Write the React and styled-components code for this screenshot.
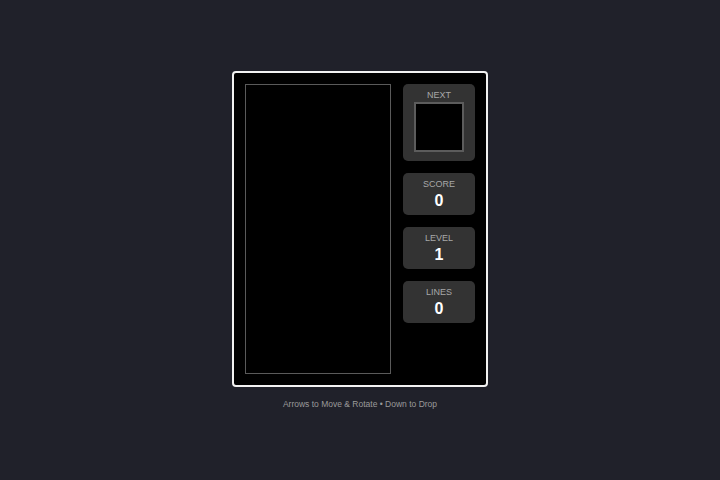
import React from "react";
import styled, { createGlobalStyle } from "styled-components";

const GlobalStyle = createGlobalStyle`
  html, body {
    margin: 0;
    padding: 0;
    background: #20212a;
    font-family: "Liberation Sans", Arial, sans-serif;
  }
`;

const Page = styled.div`
  width: 720px;
  height: 480px;
  display: flex;
  flex-direction: column;
  align-items: center;
  padding-top: 71px;
  box-sizing: border-box;
`;

const Cabinet = styled.div`
  display: flex;
  gap: 12px;
  padding: 11px;
  background: #000;
  border: 2px solid #f2f2f2;
  border-radius: 4px;
`;

const Board = styled.div`
  width: 144px;
  height: 288px;
  border: 1px solid #5a5a5a;
  background: #000;
`;

const Side = styled.div`
  width: 72px;
  display: flex;
  flex-direction: column;
  gap: 12px;
`;

const Panel = styled.div`
  background: #333333;
  border-radius: 5px;
  display: flex;
  flex-direction: column;
  align-items: center;
  padding: ${(p) => (p.$next ? "5px 0 9px" : "5px 0 5px")};
`;

const Label = styled.div`
  font-size: 9px;
  line-height: 12px;
  color: #a8a8a8;
  text-transform: uppercase;
`;

const Value = styled.div`
  margin-top: 2px;
  font-size: 16px;
  line-height: 18px;
  font-weight: 700;
  color: #fff;
`;

const Preview = styled.div`
  width: 46px;
  height: 46px;
  margin-top: 1px;
  border: 2px solid #5c5c5c;
  background: #000;
`;

const Hint = styled.div`
  margin-top: 12px;
  font-size: 8.5px;
  color: #9a9a9a;
`;

const Stat = ({ label, value }) => (
  <Panel>
    <Label>{label}</Label>
    <Value>{value}</Value>
  </Panel>
);

export default function App() {
  return (
    <>
      <GlobalStyle />
      <Page>
        <Cabinet>
          <Board />
          <Side>
            <Panel $next>
              <Label>Next</Label>
              <Preview />
            </Panel>
            <Stat label="Score" value="0" />
            <Stat label="Level" value="1" />
            <Stat label="Lines" value="0" />
          </Side>
        </Cabinet>
        <Hint>Arrows to Move &amp; Rotate • Down to Drop</Hint>
      </Page>
    </>
  );
}
